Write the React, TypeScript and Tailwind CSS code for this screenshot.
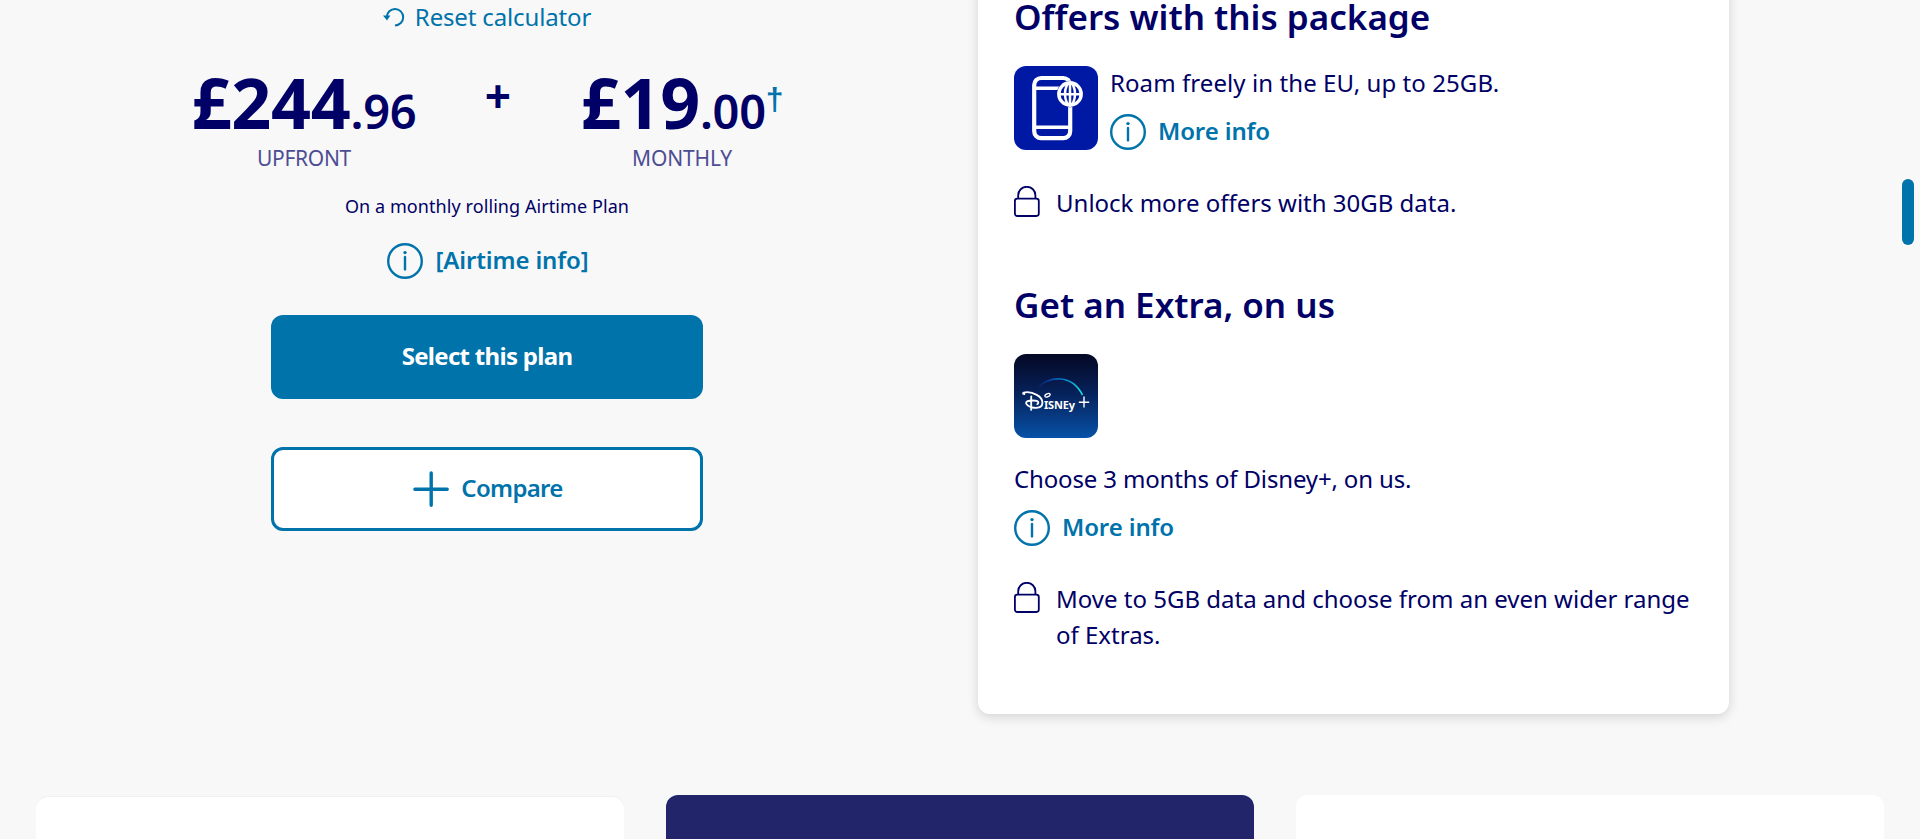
import React from "react";
import { TbBrandDisney } from "react-icons/tb";

function InfoIcon() {
  return (
    <svg className="size-9 shrink-0" viewBox="0 0 36 36" fill="none" stroke="#0073ab" strokeWidth="2.4">
      <circle cx="18" cy="18" r="16.8" />
      <path d="M18 14v12.400" strokeWidth="2.400" strokeLinecap="round" />
      <circle cx="18" cy="9.600" r="1.700" fill="#0073ab" stroke="none" />
    </svg>
  );
}

function LockIcon() {
  return (
    <svg className="h-[31px] w-[26px] shrink-0" viewBox="0 0 26 31" fill="none" stroke="#000066" strokeWidth="1.8">
      <rect x="0.9" y="12.6" width="23.9" height="17.4" rx="2.4" />
      <path d="M4.2 12.4V9.2a8.600 8.400 0 0 1 17.200 0v3.200" />
    </svg>
  );
}

function ResetIcon() {
  return (
    <svg className="mt-[7px] h-5 w-[22px] shrink-0" viewBox="0 0 22 20" fill="none" stroke="#0073ab" strokeWidth="2">
      <path d="M3.800 9.800C4 5.400 7.600 2 12 2c4.500 0 8.200 3.600 8.200 8.200 0 4.500-3.700 8.200-8.200 8.200" />
      <path d="M0 8.500H7.400L4 13.400Z" fill="#0073ab" stroke="none" />
    </svg>
  );
}

function PlusIcon() {
  return (
    <svg className="size-9 shrink-0" viewBox="0 0 36 36" stroke="#0073ab" strokeWidth="3.400" strokeLinecap="round">
      <path d="M18.200 1.900v32.300M1.900 18.200h32.300" />
    </svg>
  );
}

function RoamTile() {
  return (
    <svg className="size-[84px] shrink-0 rounded-xl bg-[#0019a5]" viewBox="0 0 84 84" fill="none" stroke="#fff" strokeWidth="4.200">
      <rect x="20.200" y="12" width="36" height="60.200" rx="7" />
      <path d="M20 22.300h28M20 61.300h36" strokeWidth="3.600" />
      <circle cx="56" cy="28" r="13.200" fill="#0019a5" stroke="none" />
      <circle cx="56" cy="28" r="11.200" strokeWidth="3.400" />
      <ellipse cx="56" cy="28" rx="5" ry="11" strokeWidth="2.500" />
      <path d="M56 17v22M45 28.200h22" strokeWidth="2.500" />
    </svg>
  );
}

function DisneyTile() {
  return (
    <div className="relative size-[84px] overflow-hidden rounded-xl bg-linear-to-b from-[#040824] via-[#06245f] to-[#0652a8] text-white">
      <svg className="absolute inset-0 size-full" viewBox="0 0 84 84" fill="none">
        <defs>
          <linearGradient id="arc" x1="22" y1="0" x2="69" y2="0" gradientUnits="userSpaceOnUse">
            <stop offset="0" stopColor="#0b2f9a" stopOpacity="0" />
            <stop offset="0.3" stopColor="#0b3fa6" />
            <stop offset="0.650" stopColor="#0788c8" />
            <stop offset="1" stopColor="#12f0ee" />
          </linearGradient>
        </defs>
        <path d="M24 33.500C36 21.500 58 20.500 68.500 41" stroke="url(#arc)" strokeWidth="1.600" />
        <path d="M70 42.600v11M64.800 48.200h10.400" stroke="#fff" strokeWidth="1.400" />
        <ellipse cx="33.500" cy="41.300" rx="2.800" ry="1.500" transform="rotate(-25 33.500 41.300)" stroke="#fff" strokeWidth="1.300" />
      </svg>
      <TbBrandDisney className="absolute left-[7px] top-[34px] h-[25px] w-[24.500px]" strokeWidth={1.800} preserveAspectRatio="none" />
      <span className="absolute left-[30px] top-[43px] text-[11px] leading-[16px] font-bold tracking-[-0.200px]">ISNEy</span>
    </div>
  );
}

function InfoLink({ label }: { label: string }) {
  return (
    <a className="flex h-9 items-start gap-3 text-2xl leading-[33px] font-semibold tracking-[-0.120px] text-[#0073ab]">
      <InfoIcon />
      <span>{label}</span>
    </a>
  );
}

function Pricing() {
  return (
    <section className="flex w-[974px] shrink-0 flex-col items-center">
      <a className="flex h-[33px] items-start gap-[10px] text-2xl leading-[33px] text-[#0073ab]">
        <ResetIcon />
        <span className="tracking-[-0.150px]">Reset calculator</span>
      </a>
      <div className="mt-6 flex w-full pl-[184px] text-center">
        <div className="w-60">
          <p className="h-[90px] text-[70px] leading-[90px] font-bold tracking-[-0.300px] whitespace-nowrap">
            £244<span className="text-[47px] font-[650]">.96</span>
          </p>
          <p className="text-[21px] leading-[22px] tracking-[-0.300px] text-[#4d4d94]">UPFRONT</p>
        </div>
        <p className="w-[148px] text-[46px] leading-[76px] font-bold">+</p>
        <div className="w-[220px]">
          <p className="h-[90px] text-[70px] leading-[90px] font-bold tracking-[-0.300px] whitespace-nowrap">
            £19<span className="text-[47px] font-[650]">.00</span>
            <span className="relative -top-[19px] font-['Liberation_Sans'] text-[32px] leading-none font-bold text-[#0073ab]">†</span>
          </p>
          <p className="text-[21px] leading-[22px] tracking-[-0.150px] text-[#4d4d94]">MONTHLY</p>
        </div>
      </div>
      <p className="mt-[25px] text-lg leading-6 tracking-[0.080px]">On a monthly rolling Airtime Plan</p>
      <div className="mt-[25px] pl-[2px]">
        <InfoLink label="[Airtime info]" />
      </div>
      <button className="mt-9 flex h-[84px] w-[432px] items-center justify-center rounded-xl bg-[#0073ab] pb-[3px] text-2xl font-bold tracking-[-0.700px] text-white">
        Select this plan
      </button>
      <button className="mt-12 flex h-[84px] w-[432px] items-center justify-center gap-3 rounded-xl border-3 border-[#0073ab] bg-white pl-[2px] text-2xl font-semibold tracking-[-0.700px] text-[#0073ab]">
        <PlusIcon />
        <span className="pb-[3px]">Compare</span>
      </button>
    </section>
  );
}

function Offers() {
  return (
    <section className="ml-1 -mt-5 h-[734px] w-[751px] shrink-0 rounded-xl bg-white px-9 pt-5 shadow-[0_3px_12px_rgba(0,0,0,0.15)]">
      <h2 className="text-[35px] leading-[34px] font-semibold">Offers with this package</h2>
      <div className="mt-8 flex gap-3">
        <RoamTile />
        <div>
          <p className="mb-[15px] text-2xl leading-[33px] tracking-[0.080px]">Roam freely in the EU, up to 25GB.</p>
          <InfoLink label="More info" />
        </div>
      </div>
      <div className="mt-9 flex gap-4">
        <LockIcon />
        <p className="text-2xl leading-[33px]">Unlock more offers with 30GB data.</p>
      </div>
      <h2 className="mt-[69px] text-[35px] leading-[34px] font-semibold">Get an Extra, on us</h2>
      <div className="mt-8">
        <DisneyTile />
      </div>
      <p className="mt-6 mb-[15px] text-2xl leading-[33px] tracking-[-0.150px]">Choose 3 months of Disney+, on us.</p>
      <InfoLink label="More info" />
      <div className="mt-9 flex gap-4">
        <LockIcon />
        <p className="-mt-px text-2xl leading-9">Move to 5GB data and choose from an even wider range of Extras.</p>
      </div>
    </section>
  );
}

export default function App() {
  return (
    <div className="relative h-[839px] w-[1920px] overflow-hidden bg-[#f8f8f8] font-['Noto_Sans',sans-serif] text-[#000066]">
      <main className="flex h-[795px] items-start">
        <Pricing />
        <Offers />
      </main>
      <div className="flex gap-[42px] px-9">
        <div className="mt-[2px] h-60 w-[588px] rounded-xl bg-white shadow-[0_-1px_1px_rgba(0,0,0,0.03)]" />
        <div className="h-60 w-[588px] rounded-xl bg-[#23256b]" />
        <div className="h-60 w-[588px] rounded-xl bg-white" />
      </div>
      <div className="absolute top-[179px] right-[6px] h-[66px] w-3 rounded-full bg-[#0073ab]" />
    </div>
  );
}
